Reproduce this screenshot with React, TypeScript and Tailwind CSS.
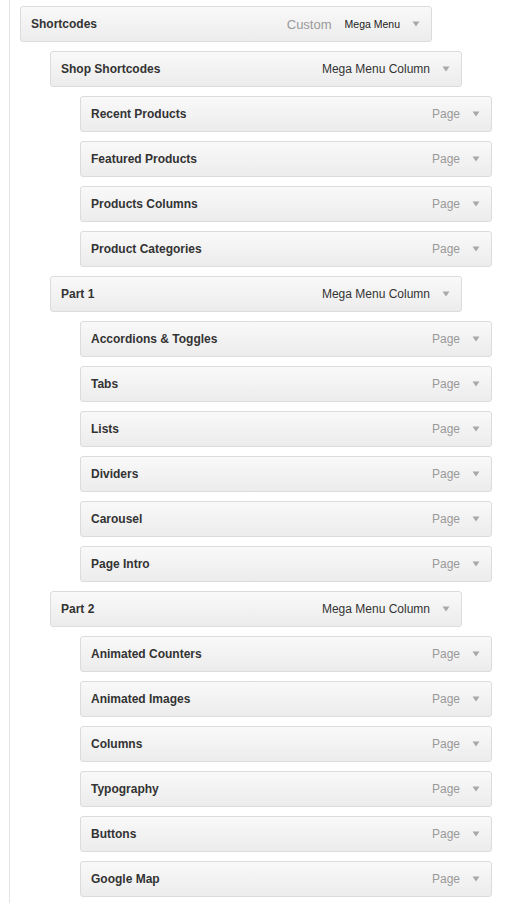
import React from "react";

type Item = { title: string; depth: number; type: string; extra?: string; typeDark?: boolean };

const items: Item[] = [
  { title: "Shortcodes", depth: 0, type: "Custom", extra: "Mega Menu" },
  { title: "Shop Shortcodes", depth: 1, type: "Mega Menu Column", typeDark: true },
  { title: "Recent Products", depth: 2, type: "Page" },
  { title: "Featured Products", depth: 2, type: "Page" },
  { title: "Products Columns", depth: 2, type: "Page" },
  { title: "Product Categories", depth: 2, type: "Page" },
  { title: "Part 1", depth: 1, type: "Mega Menu Column", typeDark: true },
  { title: "Accordions & Toggles", depth: 2, type: "Page" },
  { title: "Tabs", depth: 2, type: "Page" },
  { title: "Lists", depth: 2, type: "Page" },
  { title: "Dividers", depth: 2, type: "Page" },
  { title: "Carousel", depth: 2, type: "Page" },
  { title: "Page Intro", depth: 2, type: "Page" },
  { title: "Part 2", depth: 1, type: "Mega Menu Column", typeDark: true },
  { title: "Animated Counters", depth: 2, type: "Page" },
  { title: "Animated Images", depth: 2, type: "Page" },
  { title: "Columns", depth: 2, type: "Page" },
  { title: "Typography", depth: 2, type: "Page" },
  { title: "Buttons", depth: 2, type: "Page" },
  { title: "Google Map", depth: 2, type: "Page" },
];

const indent = ["ml-0", "ml-[30px]", "ml-[60px]"];

function Arrow() {
  return (
    <svg width="8" height="6" viewBox="0 0 8 6" className="block">
      <polygon points="0.5,0.5 7.5,0.5 4,5.5" fill="#a8a8a8" />
    </svg>
  );
}

export default function App() {
  return (
    <div
      className="min-h-[903px] bg-white"
      style={{ fontFamily: '"Liberation Sans", Arial, sans-serif' }}
    >
      <div className="ml-[9px] border-l border-[#e4e4e4] min-h-[903px] pl-[10px] pt-[6px] flex flex-col gap-[9px]">
        {items.map((it, i) => (
          <div
            key={i}
            className={`${indent[it.depth]} w-[412px] h-[36px] flex items-center justify-between rounded-[3px] border border-[#dcdcdc] bg-gradient-to-b from-[#f9f9f9] to-[#ececec] pl-[10px] pr-[11px]`}
          >
            <span className="text-[12px] font-bold text-[#333333] leading-none">{it.title}</span>
            <span className="flex items-center">
              <span
                className={`${it.extra ? "text-[13px]" : "text-[12px]"} leading-none ${
                  it.typeDark ? "text-[#333333]" : "text-[#999999]"
                }`}
              >
                {it.type}
              </span>
              {it.extra && (
                <span className="ml-[13px] text-[10.5px] leading-none text-[#222222]">{it.extra}</span>
              )}
              <span className="ml-[12px]">
                <Arrow />
              </span>
            </span>
          </div>
        ))}
      </div>
    </div>
  );
}
